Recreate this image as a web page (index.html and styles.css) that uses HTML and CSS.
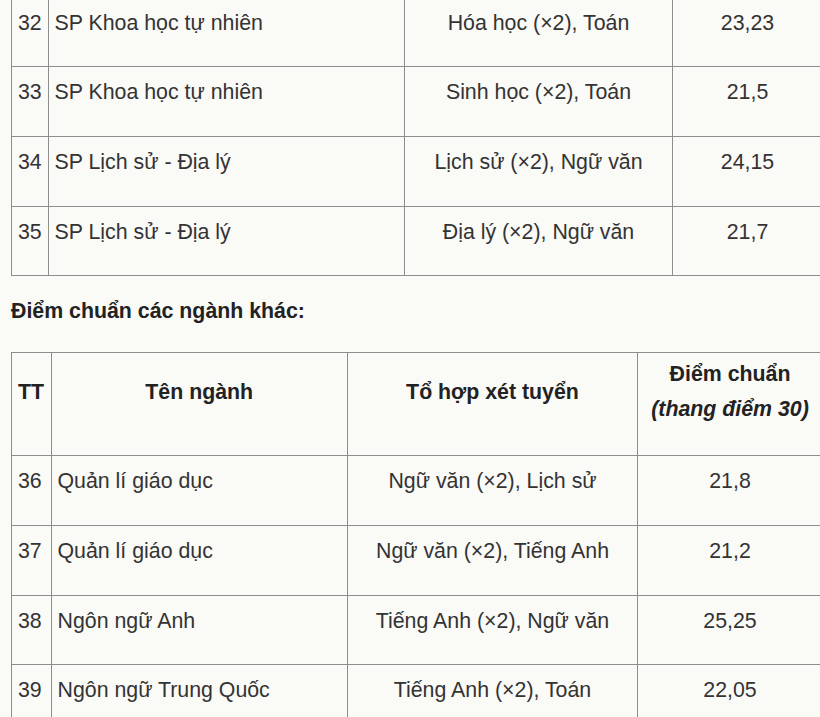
FILE: index.html
```html
<!DOCTYPE html>
<html lang="vi">
<head>
<meta charset="utf-8">
<title>Điểm chuẩn</title>
<link rel="stylesheet" href="styles.css">
</head>
<body>
<div class="page">
  <table class="scores scores-top">
    <colgroup>
      <col class="c-tt1"><col class="c-name1"><col class="c-combo1"><col class="c-score1">
    </colgroup>
    <tbody>
      <tr><td><p>32</p></td><td><p>SP Khoa học tự nhiên</p></td><td class="center"><p>Hóa học (×2), Toán</p></td><td class="center"><p>23,23</p></td></tr>
      <tr><td><p>33</p></td><td><p>SP Khoa học tự nhiên</p></td><td class="center"><p>Sinh học (×2), Toán</p></td><td class="center"><p>21,5</p></td></tr>
      <tr><td><p>34</p></td><td><p>SP Lịch sử - Địa lý</p></td><td class="center"><p>Lịch sử (×2), Ngữ văn</p></td><td class="center"><p>24,15</p></td></tr>
      <tr><td><p>35</p></td><td><p>SP Lịch sử - Địa lý</p></td><td class="center"><p>Địa lý (×2), Ngữ văn</p></td><td class="center"><p>21,7</p></td></tr>
    </tbody>
  </table>

  <p class="heading">Điểm chuẩn các ngành khác:</p>

  <table class="scores scores-bottom">
    <colgroup>
      <col class="c-tt2"><col class="c-name2"><col class="c-combo2"><col class="c-score2">
    </colgroup>
    <thead>
      <tr>
        <th><p>TT</p></th>
        <th><p>Tên ngành</p></th>
        <th><p>Tổ hợp xét tuyển</p></th>
        <th><p>Điểm chuẩn<br><em>(thang điểm 30)</em></p></th>
      </tr>
    </thead>
    <tbody>
      <tr><td><p>36</p></td><td><p>Quản lí giáo dục</p></td><td class="center"><p>Ngữ văn (×2), Lịch sử</p></td><td class="center"><p>21,8</p></td></tr>
      <tr><td><p>37</p></td><td><p>Quản lí giáo dục</p></td><td class="center"><p>Ngữ văn (×2), Tiếng Anh</p></td><td class="center"><p>21,2</p></td></tr>
      <tr><td><p>38</p></td><td><p>Ngôn ngữ Anh</p></td><td class="center"><p>Tiếng Anh (×2), Ngữ văn</p></td><td class="center"><p>25,25</p></td></tr>
      <tr><td><p>39</p></td><td><p>Ngôn ngữ Trung Quốc</p></td><td class="center"><p>Tiếng Anh (×2), Toán</p></td><td class="center"><p>22,05</p></td></tr>
    </tbody>
  </table>
</div>
</body>
</html>
```

FILE: styles.css
```css
html, body {
  margin: 0;
  padding: 0;
  background: #fafaf7;
  overflow: hidden;
}

.page {
  width: 830px;
  padding-left: 11px;
  font-family: "Liberation Sans", Arial, sans-serif;
  font-size: 21.33px;
  line-height: 34.67px;
  color: #333333;
}

.scores {
  border-collapse: collapse;
  table-layout: fixed;
  width: 811px;
}

.scores-top {
  margin-top: -3.5px;
}

.scores td,
.scores th {
  border: 1px solid #8e8e8e;
  padding: 8px 6px;
  vertical-align: middle;
  text-align: left;
}

.scores p {
  margin: 0 0 18px 0;
}

.scores .center {
  text-align: center;
}

.scores th {
  font-weight: bold;
  text-align: center;
  padding: 4px 6px 10.7px;
  color: #222;
}

.scores th:first-child {
  text-align: left;
}

.scores th em {
  font-style: italic;
}

.c-tt1 { width: 36.5px; }
.c-name1 { width: 356.5px; }
.c-combo1 { width: 268px; }
.c-score1 { width: 150px; }

.c-tt2 { width: 39.5px; }
.c-name2 { width: 296.5px; }
.c-combo2 { width: 290px; }
.c-score2 { width: 185px; }

.heading {
  margin: 17.5px 0 24px;
  font-weight: bold;
  color: #222;
}
```
